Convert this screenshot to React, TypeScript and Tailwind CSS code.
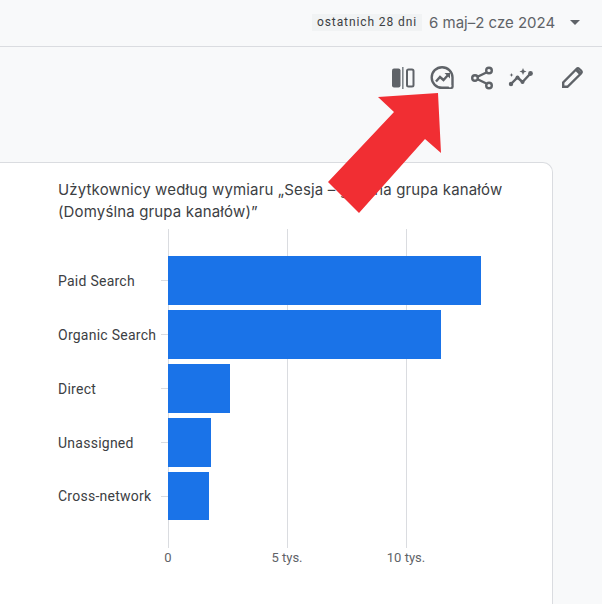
const rows = [
  { label: "Paid Search", width: 313, h: "h-[49px]" },
  { label: "Organic Search", width: 273, h: "h-[49px]" },
  { label: "Direct", width: 62, h: "h-[49px]" },
  { label: "Unassigned", width: 43, h: "h-[49px]" },
  { label: "Cross-network", width: 41, h: "h-[48px]" },
];

const ticks = [
  { label: "0", x: 0 },
  { label: "5 tys.", x: 119 },
  { label: "10 tys.", x: 238 },
];

function Arrow() {
  return (
    <svg className="absolute left-0 top-0 pointer-events-none" width="602" height="604">
      <polygon points="438,93 378,97 394,112 328,182 359,213 425,139 441,153" fill="#f12e33" />
    </svg>
  );
}

function Toolbar() {
  return (
    <div className="flex items-center h-[62px] pl-[392px]">
      <svg width="23" height="24" viewBox="0 0 23 24" className="mt-[-1px]">
        <rect x="0" y="2.500" width="8.500" height="19" rx="2" fill="#5f6368" />
        <rect x="10" y="1" width="1.600" height="22" fill="#80868b" />
        <rect x="15" y="3.500" width="6.500" height="17" rx="1.500" fill="none" stroke="#5f6368" strokeWidth="2" />
      </svg>
      <svg width="26" height="26" viewBox="0 0 26 26" className="ml-[14px]">
        <path d="M13 2.200a10.300 10.300 0 1 0 0 20.600h9.500a1 1 0 0 0 1-1v-9.500a10.300 10.300 0 0 0-10.500-10.100z" fill="none" stroke="#5f6368" strokeWidth="2.400" />
        <path d="M7 16.500l4-4.500 3.500 3 5-5.500" fill="none" stroke="#5f6368" strokeWidth="2.400" />
        <path d="M15.500 8h5.500v5.500z" fill="#5f6368" />
        <circle cx="21" cy="21" r="1.400" fill="#f8f9fa" />
      </svg>
      <svg width="24" height="24" viewBox="0 0 24 24" className="ml-[14px]">
        <path d="M19.500 5.500L6 12l13.500 6.500" fill="none" stroke="#5f6368" strokeWidth="2.400" />
        <circle cx="20" cy="4.500" r="2.800" fill="#f8f9fa" stroke="#5f6368" strokeWidth="2.400" />
        <circle cx="6" cy="12" r="2.800" fill="#f8f9fa" stroke="#5f6368" strokeWidth="2.400" />
        <circle cx="20" cy="19.500" r="2.800" fill="#f8f9fa" stroke="#5f6368" strokeWidth="2.400" />
      </svg>
      <svg width="26" height="24" viewBox="0 0 26 24" className="ml-[15px]">
        <path d="M3 18l6.500-6.500 5 4.500 8-8.500" fill="none" stroke="#5f6368" strokeWidth="2.400" />
        <circle cx="3" cy="18" r="2.200" fill="#5f6368" />
        <circle cx="9.500" cy="11.500" r="2" fill="#5f6368" />
        <circle cx="14.500" cy="16" r="2" fill="#5f6368" />
        <circle cx="22.500" cy="7.500" r="2.400" fill="#5f6368" />
        <path d="M15 2l1 2.500 2.500 1-2.500 1-1 2.500-1-2.500-2.500-1 2.500-1z" fill="#5f6368" />
        <path d="M3.500 7l.6 1.400 1.400.6-1.400.6-.6 1.400-.6-1.400-1.400-.6 1.400-.6z" fill="#5f6368" />
      </svg>
      <svg width="24" height="24" viewBox="0 0 24 24" className="ml-[26px]">
        <path d="M3.200 20.800v-4.300L16.500 3a2 2 0 0 1 2.800 0l1.700 1.700a2 2 0 0 1 0 2.800L7.500 20.800z" fill="none" stroke="#5f6368" strokeWidth="2.400" />
        <path d="M15 4.500L19.500 9l2-2-4-4.500z" fill="#5f6368" />
      </svg>
    </div>
  );
}

function Chart() {
  return (
    <div className="relative h-[319px] w-[552px]">
      {ticks.map((t) => (
        <div key={t.label} className="absolute top-0 h-[319px] w-px bg-[#dadce0]" style={{ left: 168 + t.x }} />
      ))}
      <div className="relative flex flex-col gap-[5px] pt-[27px]">
        {rows.map((r) => (
          <div key={r.label} className={`flex items-center ${r.h}`}>
            <div className="w-[161px] pl-[58px] text-[14px] leading-5 tracking-[0.25px] text-[#3c4043] whitespace-nowrap">{r.label}</div>
            <div className="w-[7px] h-px bg-[#dadce0]" />
            <div className="h-full bg-[#1a73e8]" style={{ width: r.width }} />
          </div>
        ))}
      </div>
    </div>
  );
}

export default function App() {
  return (
    <div className="relative w-[602px] h-[604px] overflow-hidden bg-[#f8f9fa] font-['Roboto',sans-serif]">
      <div className="flex items-center h-[47px] border-b border-[#dadce0] pb-[1px]">
        <div className="ml-[312px] h-[17px] px-[5px] bg-[#f1f3f4] text-[12px] leading-[17px] tracking-[0.9px] text-[#3c4043] whitespace-nowrap">ostatnich 28 dni</div>
        <div className="ml-[7px] text-[15px] leading-5 text-[#5f6368] font-['Inter',sans-serif] whitespace-nowrap">6 maj–2 cze 2024</div>
        <div className="ml-[15px] w-0 h-0 border-x-[5px] border-x-transparent border-t-[5px] border-t-[#5f6368]" />
      </div>
      <Toolbar />
      <div className="mt-[53px] w-[553px] h-[460px] bg-white border-t border-r border-[#dadce0] rounded-tr-[10px]">
        <div className="pl-[58px] pt-[16px] h-[66px] font-['Inter',sans-serif] text-[15px] leading-[22px] tracking-[0.15px] text-[#3c4043]">
          <div className="whitespace-nowrap">Użytkownicy według wymiaru „Sesja – główna grupa kanałów</div>
          <div className="whitespace-nowrap">(Domyślna grupa kanałów)”</div>
        </div>
        <Chart />
        <div className="relative flex h-[20px] text-[13px] leading-5 text-[#5f6368]">
          {ticks.map((t) => (
            <span key={t.label} className="absolute top-0 -translate-x-1/2 whitespace-nowrap" style={{ left: 168 + t.x }}>{t.label}</span>
          ))}
        </div>
      </div>
      <Arrow />
    </div>
  );
}
